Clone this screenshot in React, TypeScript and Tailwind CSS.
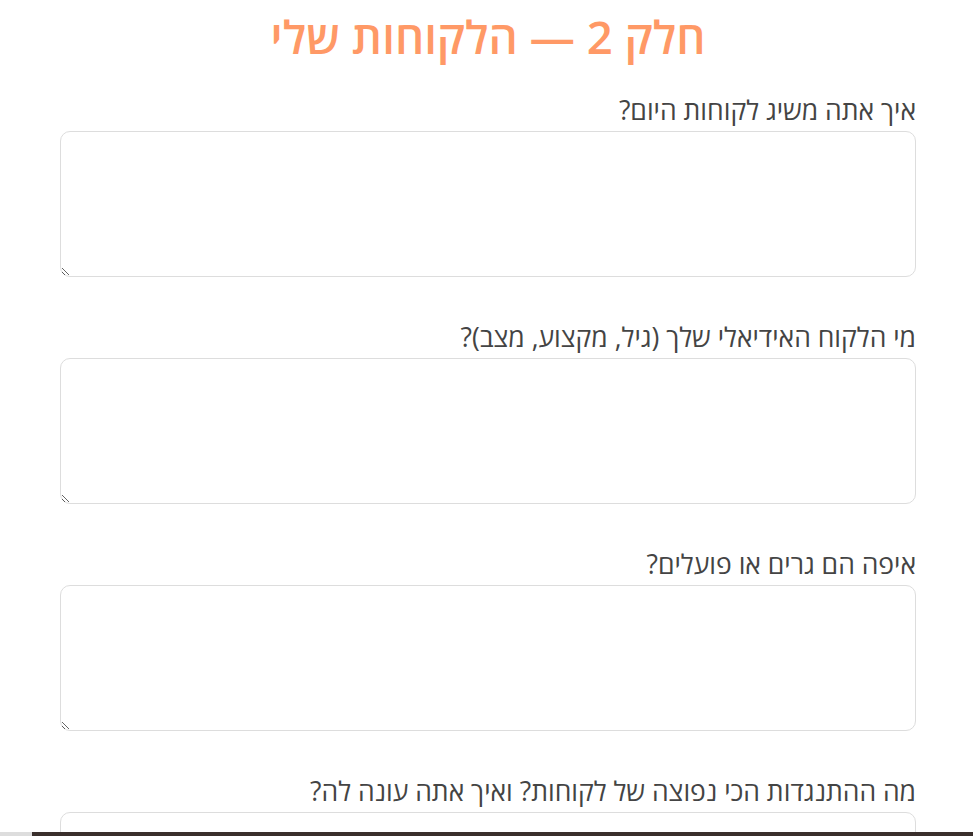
const questions = [
  'איך אתה משיג לקוחות היום?',
  'מי הלקוח האידיאלי שלך (גיל, מקצוע, מצב)?',
  'איפה הם גרים או פועלים?',
  'מה ההתנגדות הכי נפוצה של לקוחות? ואיך אתה עונה לה?',
];

export default function App() {
  return (
    <div
      dir="rtl"
      className="min-h-screen bg-white text-[#444]"
      style={{ fontFamily: '"Open Sans", "DejaVu Sans", sans-serif' }}
    >
      <div className="mr-[57px] w-[856px] pt-[6px]">
        <h1 className="mb-[26px] text-center text-[45.5px] font-semibold leading-[60px] text-[#ff9966]">
          חלק 2 — הלקוחות שלי
        </h1>
        {questions.map((q, i) => (
          <div key={i} className="mb-[42px]">
            <label className="mb-[3px] block text-[26.5px] leading-[36px]">{q}</label>
            <textarea className="block h-[146px] w-full rounded-[10px] border border-[#ddd] bg-white p-2 outline-none" />
          </div>
        ))}
      </div>
      <div className="fixed bottom-0 left-0 right-0 flex h-[4px]" dir="ltr">
        <div className="w-[32px] bg-[#ddd]" />
        <div className="flex-1 bg-[#3a2f2c]" />
      </div>
    </div>
  );
}
